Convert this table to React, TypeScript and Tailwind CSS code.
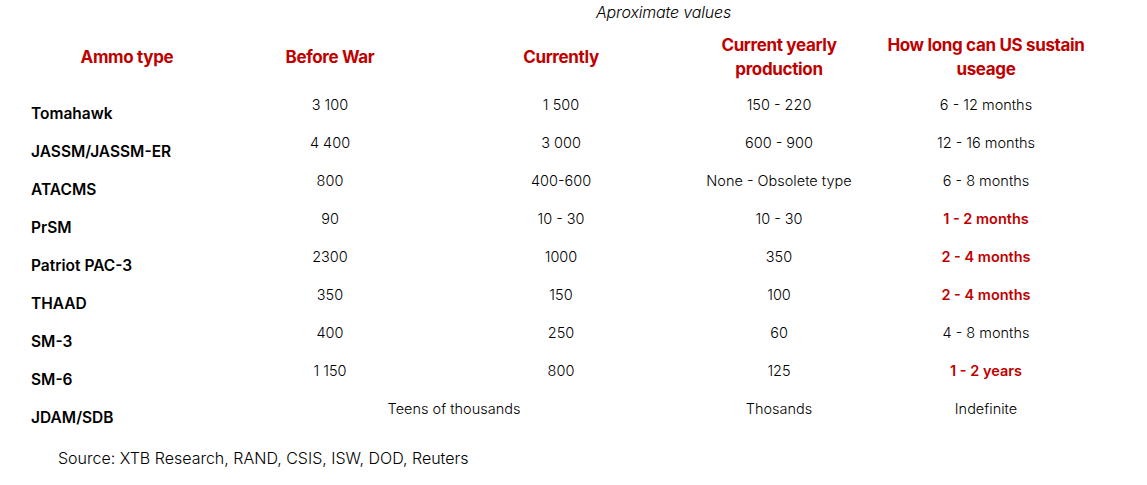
const rows: { name: string; before: string; now: string; yearly: string; sustain: string; alert?: boolean }[] = [
  { name: "Tomahawk", before: "3 100", now: "1 500", yearly: "150 - 220", sustain: "6 - 12 months" },
  { name: "JASSM/JASSM-ER", before: "4 400", now: "3 000", yearly: "600 - 900", sustain: "12 - 16 months" },
  { name: "ATACMS", before: "800", now: "400-600", yearly: "None - Obsolete type", sustain: "6 - 8 months" },
  { name: "PrSM", before: "90", now: "10 - 30", yearly: "10 - 30", sustain: "1 - 2 months", alert: true },
  { name: "Patriot PAC-3", before: "2300", now: "1000", yearly: "350", sustain: "2 - 4 months", alert: true },
  { name: "THAAD", before: "350", now: "150", yearly: "100", sustain: "2 - 4 months", alert: true },
  { name: "SM-3", before: "400", now: "250", yearly: "60", sustain: "4 - 8 months" },
  { name: "SM-6", before: "1 150", now: "800", yearly: "125", sustain: "1 - 2 years", alert: true },
];

const cols = "grid grid-cols-[192px_214px_248px_188px_226px]";

export default function App() {
  return (
    <div className="w-[1147px] h-[485px] bg-white text-black font-['Inter','Liberation_Sans',sans-serif] pl-[31px] pt-[2px]">
      <div className="ml-[565px] text-[16px] leading-[20px] italic font-light tracking-[-0.01em]">Aproximate values</div>

      <div className={`${cols} mt-[11px] h-[48px] items-center text-center text-[17px] leading-[24px] font-bold tracking-[-0.02em] text-[#c00000]`}>
        <div>Ammo type</div>
        <div>Before War</div>
        <div>Currently</div>
        <div>
          Current yearly
          <br />
          production
        </div>
        <div>
          How long can US sustain
          <br />
          useage
        </div>
      </div>

      <div className="mt-[14px]">
        {rows.map((r) => (
          <div key={r.name} className={`${cols} h-[38px] items-start text-center text-[14.5px] leading-[20px] font-light`}>
            <div className="mt-[9px] text-left text-[15.5px] font-semibold">{r.name}</div>
            <div>{r.before}</div>
            <div>{r.now}</div>
            <div>{r.yearly}</div>
            <div className={r.alert ? "font-semibold text-[#c00000]" : ""}>{r.sustain}</div>
          </div>
        ))}
        <div className={`${cols} h-[38px] items-start text-center text-[14.5px] leading-[20px] font-light`}>
          <div className="mt-[9px] text-left text-[15.5px] font-semibold">JDAM/SDB</div>
          <div className="col-span-2">Teens of thousands</div>
          <div>Thosands</div>
          <div>Indefinite</div>
        </div>
      </div>

      <div className="mt-[11px] ml-[27px] text-[16px] leading-[20px] font-light">
        Source: XTB Research, RAND, CSIS, ISW, DOD, Reuters
      </div>
    </div>
  );
}
